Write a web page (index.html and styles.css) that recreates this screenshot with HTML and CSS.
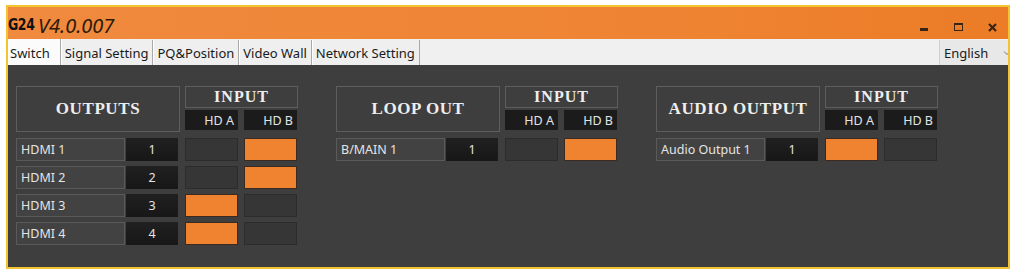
FILE: index.html
```html
<!DOCTYPE html>
<html lang="en">
<head>
  <meta charset="UTF-8" />
  <title>G24 V4.0.007</title>
  <link rel="stylesheet" href="styles.css">
</head>
<body>
  <div class="window">
    <header class="titlebar">
      <span class="brand">G24</span>
      <span class="version">V4.0.007</span>
      <div class="controls">
        <svg class="ctl" width="12" height="12" viewBox="0 0 12 12"><rect x="2" y="7" width="8" height="3" fill="#3a2413"/></svg>
        <svg class="ctl" width="12" height="12" viewBox="0 0 12 12"><rect x="2.5" y="2.5" width="8" height="7" fill="none" stroke="#3a2413" stroke-width="1"/><rect x="2" y="2" width="9" height="2" fill="#3a2413"/></svg>
        <svg class="ctl" width="12" height="12" viewBox="0 0 12 12"><path d="M3 3 L10 10 M10 3 L3 10" stroke="#3a2413" stroke-width="2.2"/></svg>
      </div>
    </header>

    <nav class="tabbar">
      <div class="tabs">
        <span class="tab active">Switch</span>
        <span class="tab">Signal Setting</span>
        <span class="tab">PQ&amp;Position</span>
        <span class="tab">Video Wall</span>
        <span class="tab">Network Setting</span>
      </div>
      <div class="lang">
        <span>English</span>
        <svg width="8" height="6" viewBox="0 0 8 6"><path d="M1 1.5 L4 4.5 L7 1.5" fill="none" stroke="#777" stroke-width="1"/></svg>
      </div>
    </nav>

    <main class="panel">
      <section class="group">
        <div class="head">
          <div class="title">OUTPUTS</div>
          <div class="input">
            <div class="input-title">INPUT</div>
            <div class="hd-row"><span class="hd">HD A</span><span class="hd">HD B</span></div>
          </div>
        </div>
        <div class="row"><span class="label">HDMI 1</span><span class="num">1</span><span class="cell"></span><span class="cell on"></span></div>
        <div class="row"><span class="label">HDMI 2</span><span class="num">2</span><span class="cell"></span><span class="cell on"></span></div>
        <div class="row"><span class="label">HDMI 3</span><span class="num">3</span><span class="cell on"></span><span class="cell"></span></div>
        <div class="row"><span class="label">HDMI 4</span><span class="num">4</span><span class="cell on"></span><span class="cell"></span></div>
      </section>

      <section class="group">
        <div class="head">
          <div class="title">LOOP OUT</div>
          <div class="input">
            <div class="input-title">INPUT</div>
            <div class="hd-row"><span class="hd">HD A</span><span class="hd">HD B</span></div>
          </div>
        </div>
        <div class="row"><span class="label">B/MAIN 1</span><span class="num">1</span><span class="cell"></span><span class="cell on"></span></div>
      </section>

      <section class="group">
        <div class="head">
          <div class="title">AUDIO OUTPUT</div>
          <div class="input">
            <div class="input-title">INPUT</div>
            <div class="hd-row"><span class="hd">HD A</span><span class="hd">HD B</span></div>
          </div>
        </div>
        <div class="row"><span class="label">Audio Output 1</span><span class="num">1</span><span class="cell on"></span><span class="cell"></span></div>
      </section>
    </main>
  </div>
</body>
</html>
```

FILE: styles.css
```css
body {
  margin: 0;
  background: #ffffff;
  font-family: "Noto Sans", "Open Sans", sans-serif;
}

.window {
  width: 1000px;
  height: 260px;
  margin: 5px 0 0 6px;
  border: 2px solid #f2c530;
  display: flex;
  flex-direction: column;
  overflow: hidden;
}

/* title bar */
.titlebar {
  height: 32px;
  flex: none;
  display: flex;
  align-items: center;
  background: linear-gradient(90deg, #f08a3e, #ee8332 70%, #ec7c26);
}

.brand {
  display: inline-block;
  font-family: "DejaVu Sans", sans-serif;
  font-weight: bold;
  font-size: 16px;
  letter-spacing: -0.5px;
  color: #111;
  transform: scaleX(0.78);
  transform-origin: left center;
  padding-top: 2px;
  width: 28px;
}

.version {
  font-family: "Noto Sans", sans-serif;
  font-style: italic;
  font-size: 20px;
  color: #2e1a0c;
  margin-left: 2px;
  padding-top: 4px;
}

.controls {
  margin-left: auto;
  display: flex;
  gap: 22px;
  padding-right: 10px;
  padding-top: 7px;
}

/* tabs */
.tabbar {
  height: 26px;
  flex: none;
  display: flex;
  background: #f0f0f0;
  font-size: 13px;
  color: #1a1a1a;
}

.tabs {
  display: flex;
}

.tab {
  display: flex;
  align-items: center;
  padding: 1px 4px 0 4px;
  margin-top: 1px;
  border-right: 1px solid #a9a9a9;
  box-shadow: inset 1px 0 0 #ffffff;
  background: #efefef;
}

.tab.active {
  background: #fbfbfb;
  margin-top: 0;
  padding-left: 2px;
  padding-right: 10px;
}

.lang {
  margin-left: auto;
  width: 64px;
  margin-top: 1px;
  display: flex;
  align-items: center;
  justify-content: space-between;
  padding-left: 4px;
  background: #e8e8e8;
  border-left: 1px solid #d0d0d0;
  overflow: hidden;
}

.lang svg {
  margin-right: -3px;
}

/* switch panel */
.panel {
  flex: 1;
  background: #3e3e3e;
  display: flex;
  align-items: flex-start;
  gap: 38px;
  padding: 21px 0 0 8px;
}

.group {
  width: 282px;
  display: flex;
  flex-direction: column;
  gap: 5px;
}

.head {
  display: flex;
  gap: 5px;
  margin-bottom: 1px;
}

.title {
  width: 162px;
  height: 44px;
  border: 1px solid #5e5e5e;
  display: flex;
  align-items: center;
  justify-content: center;
  font-family: "Liberation Serif", serif;
  font-weight: bold;
  font-size: 17px;
  letter-spacing: 0.6px;
  color: #eeeeee;
}

.input {
  width: 113px;
  display: flex;
  flex-direction: column;
  gap: 2px;
}

.input-title {
  height: 20px;
  border: 1px solid #5e5e5e;
  display: flex;
  align-items: center;
  justify-content: center;
  font-family: "Liberation Serif", serif;
  font-weight: bold;
  font-size: 16px;
  letter-spacing: 1px;
  color: #eeeeee;
}

.hd-row {
  display: flex;
  gap: 6px;
}

.hd {
  width: 53px;
  height: 20px;
  background: #1b1b1b;
  display: flex;
  align-items: center;
  justify-content: flex-end;
  padding-right: 4px;
  box-sizing: border-box;
  font-size: 12.5px;
  color: #e4e4e4;
}

.row {
  height: 23px;
  display: flex;
  align-items: stretch;
  font-size: 12.5px;
  color: #e4e4e4;
}

.label {
  width: 109px;
  box-sizing: border-box;
  border: 1px solid #5a5a5a;
  background: #424242;
  padding-left: 4px;
  display: flex;
  align-items: center;
}

.num {
  width: 52px;
  margin-left: 1px;
  background: linear-gradient(#202020, #171717);
  display: flex;
  align-items: center;
  justify-content: center;
}

.cell {
  width: 53px;
  margin-left: 7px;
  box-sizing: border-box;
  border: 1px solid #2c2c2c;
  background: #363636;
}

.cell + .cell {
  margin-left: 6px;
}

.cell.on {
  background: #f0832f;
  border-color: #3a2a20;
}
```
